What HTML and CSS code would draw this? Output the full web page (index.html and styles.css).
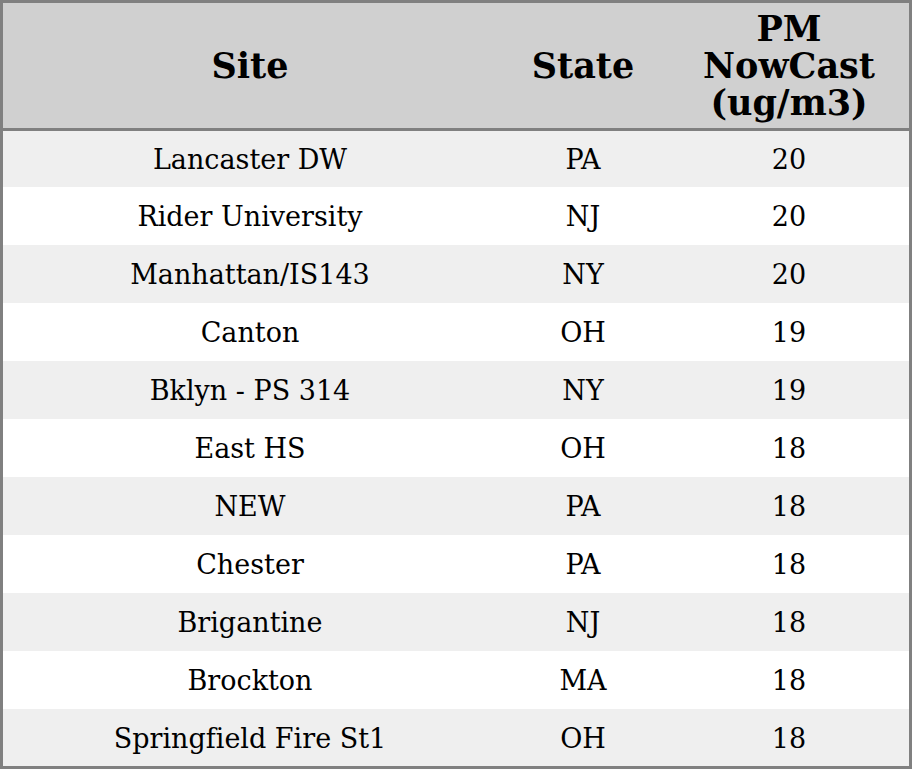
FILE: index.html
```html
<!DOCTYPE html>
<html>
<head>
<meta charset="utf-8">
<link rel="stylesheet" href="styles.css">
</head>
<body>
<table class="aq-table">
  <thead>
    <tr>
      <th class="col-site">Site</th>
      <th class="col-state">State</th>
      <th class="col-pm">PM<br>NowCast<br>(ug/m3)</th>
    </tr>
  </thead>
  <tbody>
    <tr><td>Lancaster DW</td><td>PA</td><td>20</td></tr>
    <tr><td>Rider University</td><td>NJ</td><td>20</td></tr>
    <tr><td>Manhattan/IS143</td><td>NY</td><td>20</td></tr>
    <tr><td>Canton</td><td>OH</td><td>19</td></tr>
    <tr><td>Bklyn - PS 314</td><td>NY</td><td>19</td></tr>
    <tr><td>East HS</td><td>OH</td><td>18</td></tr>
    <tr><td>NEW</td><td>PA</td><td>18</td></tr>
    <tr><td>Chester</td><td>PA</td><td>18</td></tr>
    <tr><td>Brigantine</td><td>NJ</td><td>18</td></tr>
    <tr><td>Brockton</td><td>MA</td><td>18</td></tr>
    <tr><td>Springfield Fire St1</td><td>OH</td><td>18</td></tr>
  </tbody>
</table>
</body>
</html>
```
FILE: styles.css
```css
html, body {
  margin: 0;
  padding: 0;
  background: #ffffff;
}
body {
  font-family: "DejaVu Serif", serif;
  color: #000;
  font-variant-ligatures: none;
}
.aq-table {
  width: 912px;
  border: 3px solid #808080;
  border-spacing: 0;
  border-collapse: separate;
  table-layout: fixed;
}
.aq-table th {
  background: #d0d0d0;
  font-size: 35px;
  font-weight: bold;
  line-height: 37px;
  height: 125px;
  padding: 0;
  text-align: center;
  vertical-align: middle;
  border-bottom: 3px solid #808080;
}
.col-site { width: 494px; }
.col-state { width: 172px; }
.col-pm { width: 240px; }
.aq-table td {
  font-size: 27px;
  line-height: 32px;
  height: 56px;
  padding: 2px 0 0 0;
  text-align: center;
  vertical-align: middle;
}
.aq-table tbody tr:first-child td { height: 54px; }
.aq-table tbody tr:last-child td { height: 55px; }
.aq-table tbody tr:nth-child(odd) td { background: #efefef; }
.aq-table tbody tr:nth-child(even) td { background: #ffffff; }
```
